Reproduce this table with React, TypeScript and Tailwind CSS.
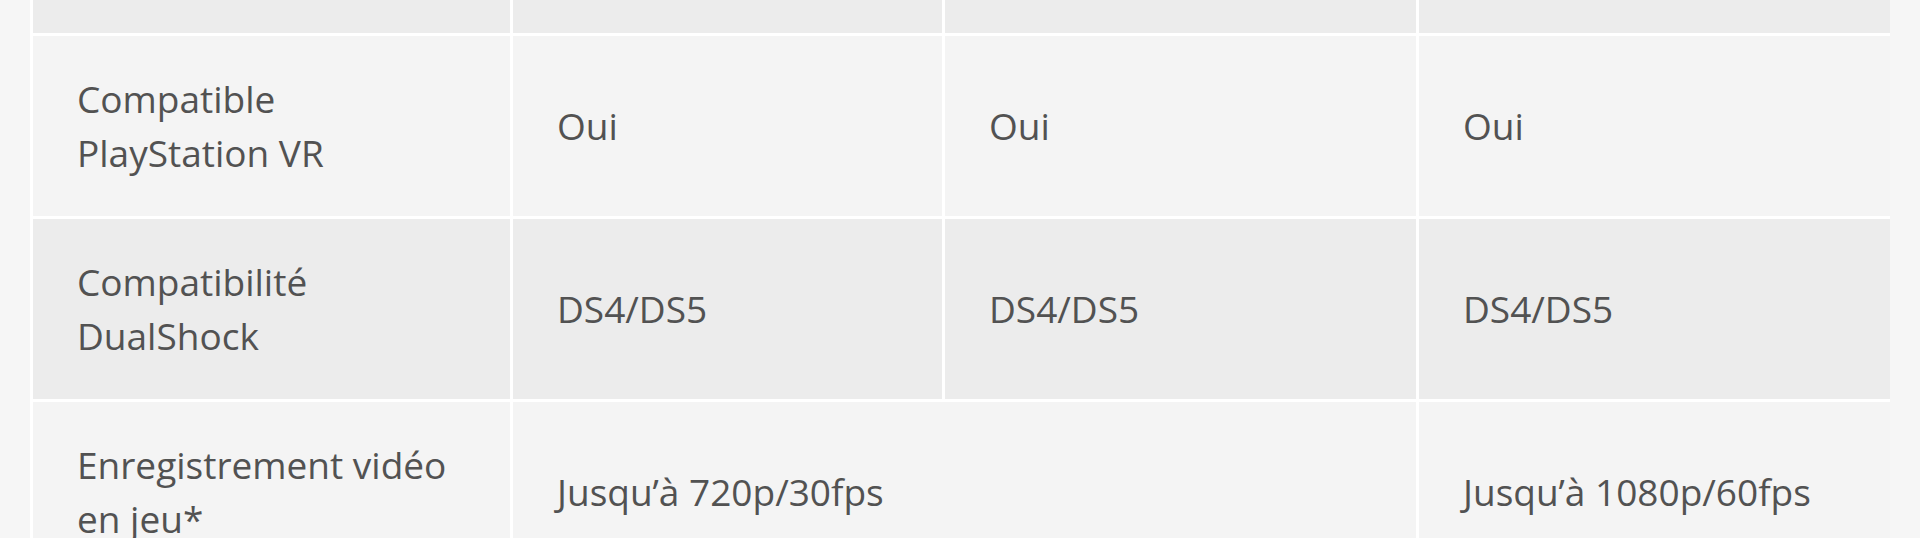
type Row = {
  label: string[];
  cells: { text: string; span?: number }[];
  tone: "dark" | "light";
};

const rows: Row[] = [
  {
    label: ["Compatible", "PlayStation VR"],
    cells: [{ text: "Oui" }, { text: "Oui" }, { text: "Oui" }],
    tone: "light",
  },
  {
    label: ["Compatibilité", "DualShock"],
    cells: [{ text: "DS4/DS5" }, { text: "DS4/DS5" }, { text: "DS4/DS5" }],
    tone: "dark",
  },
  {
    label: ["Enregistrement vidéo", "en jeu*"],
    cells: [{ text: "Jusqu’à 720p/30fps", span: 2 }, { text: "Jusqu’à 1080p/60fps" }],
    tone: "light",
  },
];

function Cell({ children, tone, span }: { children: React.ReactNode; tone: "dark" | "light"; span?: number }) {
  return (
    <div
      className={
        "flex items-center py-[36px] pl-[44px] pr-4 " +
        (tone === "dark" ? "bg-[#ececec] " : "bg-[#f4f4f4] ") +
        (span === 2 ? "col-span-2" : "")
      }
    >
      {children}
    </div>
  );
}

export default function App() {
  return (
    <div
      className="w-[1920px] h-[538px] overflow-hidden bg-[#f6f6f6] pl-[30px] pr-[30px] text-[37px] leading-[54px] text-[#525252]"
      style={{ fontFamily: '"Open Sans", "Noto Sans", sans-serif' }}
    >
      <div className="grid grid-cols-[477px_429px_471px_1fr] gap-[3px] bg-white border-l-[3px] border-white">
        {/* tail of the previous row */}
        <div className="h-[33px] bg-[#ececec]" />
        <div className="h-[33px] bg-[#ececec]" />
        <div className="h-[33px] bg-[#ececec]" />
        <div className="h-[33px] bg-[#ececec]" />

        {rows.map((row) => (
          <div key={row.label.join(" ")} className="contents">
            <Cell tone={row.tone}>
              <div>
                {row.label.map((l) => (
                  <div key={l}>{l}</div>
                ))}
              </div>
            </Cell>
            {row.cells.map((c, i) => (
              <Cell key={i} tone={row.tone} span={c.span}>
                {c.text}
              </Cell>
            ))}
          </div>
        ))}
      </div>
    </div>
  );
}
